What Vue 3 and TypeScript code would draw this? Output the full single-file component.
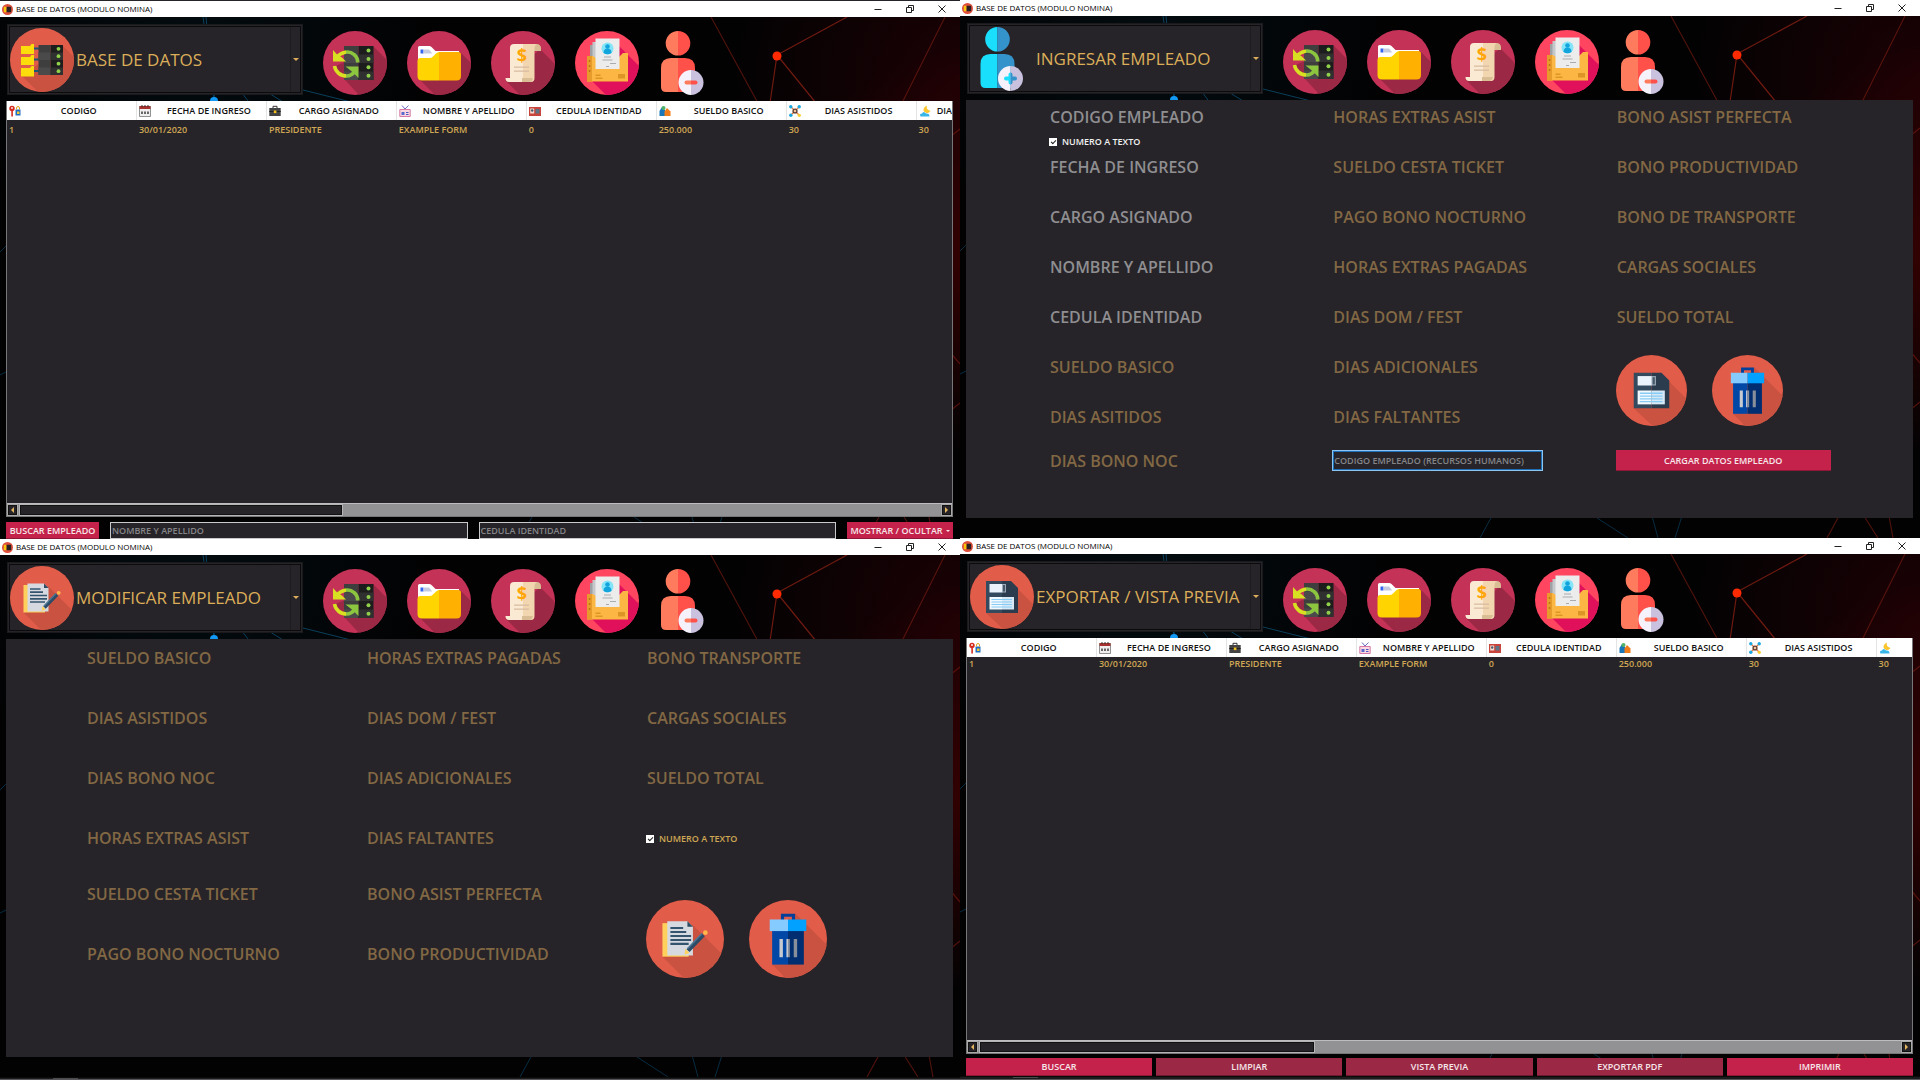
<script setup lang="ts">
import { ref } from 'vue'

interface Column {
  label: string
  icon: string
  value: string
}

interface Field {
  label: string
  required?: boolean
}

const tools = [
  { icon: 'sync', label: 'Actualizar' },
  { icon: 'folder', label: 'Archivos' },
  { icon: 'scroll', label: 'Recibos' },
  { icon: 'docs', label: 'Expedientes' },
]

const baseColumns: Column[] = [
  { label: 'CODIGO', icon: 'h-key', value: '1' },
  { label: 'FECHA DE INGRESO', icon: 'h-calendar', value: '30/01/2020' },
  { label: 'CARGO ASIGNADO', icon: 'h-case', value: 'PRESIDENTE' },
  { label: 'NOMBRE Y APELLIDO', icon: 'h-badge', value: 'EXAMPLE FORM' },
  { label: 'CEDULA IDENTIDAD', icon: 'h-card', value: '0' },
  { label: 'SUELDO BASICO', icon: 'h-money', value: '250.000' },
  { label: 'DIAS ASISTIDOS', icon: 'h-team', value: '30' },
]

const tableColumns: Record<string, Column[]> = {
  table: [...baseColumns, { label: 'DIAS BONO NOCTURNO', icon: 'h-moon', value: '30' }],
  export: [...baseColumns, { label: 'DIAS BONO NOC', icon: 'h-moon', value: '30' }],
}

const insertColumns: Field[][] = [
  [
    { label: 'CODIGO EMPLEADO', required: true },
    { label: 'FECHA DE INGRESO', required: true },
    { label: 'CARGO ASIGNADO', required: true },
    { label: 'NOMBRE Y APELLIDO', required: true },
    { label: 'CEDULA IDENTIDAD', required: true },
    { label: 'SUELDO BASICO' },
    { label: 'DIAS ASITIDOS' },
    { label: 'DIAS BONO NOC' },
  ],
  [
    { label: 'HORAS EXTRAS ASIST' },
    { label: 'SUELDO CESTA TICKET' },
    { label: 'PAGO BONO NOCTURNO' },
    { label: 'HORAS EXTRAS PAGADAS' },
    { label: 'DIAS DOM / FEST' },
    { label: 'DIAS ADICIONALES' },
    { label: 'DIAS FALTANTES' },
  ],
  [
    { label: 'BONO ASIST PERFECTA' },
    { label: 'BONO PRODUCTIVIDAD' },
    { label: 'BONO DE TRANSPORTE' },
    { label: 'CARGAS SOCIALES' },
    { label: 'SUELDO TOTAL' },
  ],
]

const editColumns: Field[][] = [
  [
    { label: 'SUELDO BASICO' },
    { label: 'DIAS ASISTIDOS' },
    { label: 'DIAS BONO NOC' },
    { label: 'HORAS EXTRAS ASIST' },
    { label: 'SUELDO CESTA TICKET' },
    { label: 'PAGO BONO NOCTURNO' },
  ],
  [
    { label: 'HORAS EXTRAS PAGADAS' },
    { label: 'DIAS DOM / FEST' },
    { label: 'DIAS ADICIONALES' },
    { label: 'DIAS FALTANTES' },
    { label: 'BONO ASIST PERFECTA' },
    { label: 'BONO PRODUCTIVIDAD' },
  ],
  [
    { label: 'BONO TRANSPORTE' },
    { label: 'CARGAS SOCIALES' },
    { label: 'SUELDO TOTAL' },
  ],
]

const exportActions = [
  { label: 'BUSCAR', strong: true },
  { label: 'LIMPIAR', strong: false },
  { label: 'VISTA PREVIA', strong: false },
  { label: 'EXPORTAR PDF', strong: false },
  { label: 'IMPRIMIR', strong: true },
]

const sides = [
  [
    { kind: 'table', title: 'BASE DE DATOS', icon: 'database' },
    { kind: 'edit', title: 'MODIFICAR EMPLEADO', icon: 'edit' },
  ],
  [
    { kind: 'insert', title: 'INGRESAR EMPLEADO', icon: 'person-add' },
    { kind: 'export', title: 'EXPORTAR / VISTA PREVIA', icon: 'save' },
  ],
]

const insertAsText = ref(true)
const editAsText = ref(true)
</script>

<template>
  <svg class="sprite" width="0" height="0" aria-hidden="true">
    <defs>
      <clipPath id="disc"><circle cx="32" cy="32" r="32" /></clipPath>
      <linearGradient id="lime" gradientUnits="userSpaceOnUse" x1="0" y1="0" x2="64" y2="0">
        <stop offset="0.36" stop-color="#d8e021" /><stop offset="0.36" stop-color="#8cc63f" />
      </linearGradient>
    </defs>

    <symbol id="sync" viewBox="0 0 64 64">
      <circle cx="32" cy="32" r="32" fill="#c43257" />
      <path d="M50 15l14 14v35H36L10 36l14-6z" fill="#9b2946" clip-path="url(#disc)" />
      <path d="M21 15h14.500v34H21z" fill="#3e3e3f" />
      <path d="M21 23.500h14.500v8.500H21zM21 40.500h14.500v8.500H21z" fill="#4a4a4b" />
      <path d="M35.500 15h15v34h-15z" fill="#1d1d1e" />
      <path d="M35.500 23.500h15v8.500h-15zM35.500 40.500h15v8.500h-15z" fill="#303031" />
      <g fill="#8fd14a"><circle cx="45.500" cy="19.500" r="2" /><circle cx="45.500" cy="28" r="2" /><circle cx="45.500" cy="36.300" r="2" /><circle cx="45.500" cy="44.700" r="2" /></g>
      <g fill="none" stroke="url(#lime)" stroke-width="3.600">
        <path d="M14 26c4-5 12-7 17-2.500 2.500 2 3.700 4.500 3.700 8" />
        <path d="M11.500 35c1 6 6 10 12 10 4 0 6.500-2 8.500-5" />
      </g>
      <path d="M10 19v11.500h13l-4-4-4.500-2.500z" fill="#d8e021" />
      <path d="M35.500 47V35.500h-13l4.500 3.500 3.500 3z" fill="#8cc63f" />
    </symbol>

    <symbol id="folder" viewBox="0 0 64 64">
      <circle cx="32" cy="32" r="32" fill="#c43257" />
      <path d="M53 21l11 11v32H28L11 47z" fill="#9b2946" clip-path="url(#disc)" />
      <path d="M11 16.500q0-1.500 1.500-1.500H22q1.500 0 2.500 1l4 4H52v12H11z" fill="#fff" />
      <path d="M13.500 18.500h3v4h-3z" fill="#3465f0" />
      <path d="M16.500 18.500H22q2 2 3 4h-8.500z" fill="#c7cbe0" />
      <path d="M10.500 30q0-3 3-3h9q2 0 3.500-1.500l3-3q1.500-1.500 3-1.500v28.500H15q-4.500 0-4.500-4.500z" fill="#ffd400" />
      <path d="M32 21h19.500q2.500 0 2.500 2.500V45q0 4.500-4.500 4.500H32z" fill="#ffb000" />
    </symbol>

    <symbol id="scroll" viewBox="0 0 64 64">
      <circle cx="32" cy="32" r="32" fill="#c43257" />
      <path d="M49 18l14 14v32H29L15 50z" fill="#9b2946" clip-path="url(#disc)" />
      <path d="M38 13h7.500q4.500 0 4.500 4.500V20h-7z" fill="#d9bd94" />
      <path d="M23 13h9v38H19V17q0-4 4-4z" fill="#fbead3" />
      <path d="M32 13h14q-2.500 1-2.500 4.500V47q0 4-3.500 4h-8z" fill="#f2d6b0" />
      <path d="M14.500 47H32v4H18q-3.500 0-3.500-4z" fill="#fbead3" />
      <path d="M31 47h11q-1 4-4 4h-7z" fill="#d9bd94" />
      <path d="M23 35.500h15v1.300H23zM23 39.500h15v1.300H23z" fill="#d8bba0" />
      <text x="31" y="31" text-anchor="middle" font-family="Open Sans, sans-serif" font-size="18" font-weight="700" fill="#ffa60a">$</text>
    </symbol>

    <symbol id="docs" viewBox="0 0 64 64">
      <circle cx="32" cy="32" r="32" fill="#ff4560" />
      <path d="M44 15l20 20v29H31L16 49z" fill="#e0105b" clip-path="url(#disc)" />
      <path d="M15 14h6v14h-6z" fill="#9fa2a5" /><path d="M17.500 11h5v16h-5z" fill="#c5c8ca" />
      <path d="M12 25h6l4 3h22v-2l4-4h5v28.500H12z" fill="#fcb643" />
      <path d="M12 25h5v25.500h-5z" fill="#e69b2b" />
      <path d="M13.800 29h1.500v2h-1.500zM13.800 34h1.500v2h-1.500zM13.800 39h1.500v2h-1.500z" fill="#b97716" />
      <path d="M20.500 7.500h24V38h-24z" fill="#ececed" />
      <circle cx="32.500" cy="17.500" r="6" fill="#83e5f7" />
      <circle cx="32.500" cy="15.500" r="2.300" fill="#12a5dd" /><path d="M28.500 22q0-4.500 4-4.500t4 4.500q-4 2.500-8 0z" fill="#12a5dd" />
      <path d="M29 25.500h7v1h-7zM27.500 28.500h10v1h-10zM35 32h6v1h-6zM31 35h3v1h-3z" fill="#a9abae" />
      <path d="M43 43h7v4.500h-7zM20.500 43.500h5V45h-5zM20.500 46.500h7V48h-7z" fill="#dd9526" />
    </symbol>

    <symbol id="person-minus" viewBox="0 0 43 64">
      <path d="M17 0a12.300 12.300 0 0 0 0 24.600zM17 27h-7Q0 27 0 37v19q0 5 5 5h12z" fill="#ff7b5d" />
      <path d="M17 0a12.300 12.300 0 0 1 0 24.600zM17 27h7q10 0 10 10v24H17z" fill="#ff5149" />
      <path d="M30 39a12.400 12.400 0 0 0 0 25z" fill="#f5f2fc" /><path d="M30 39a12.400 12.400 0 0 1 0 25z" fill="#c9c1de" />
      <path d="M30 49.500h-4.500a2 2 0 0 0 0 4H30z" fill="#ff7b5d" /><path d="M30 49.500h4.500a2 2 0 0 1 0 4H30z" fill="#ff5149" />
    </symbol>

    <symbol id="person-add" viewBox="-10.500 0 64 64">
      <path d="M17 0a12.300 12.300 0 0 0 0 24.600zM17 27h-7Q0 27 0 37v19q0 5 5 5h12z" fill="#19dffd" />
      <path d="M17 0a12.300 12.300 0 0 1 0 24.600zM17 27h7q10 0 10 10v24H17z" fill="#3593cb" />
      <path d="M30 39a12.400 12.400 0 0 0 0 25z" fill="#f5f2fc" /><path d="M30 39a12.400 12.400 0 0 1 0 25z" fill="#c9c1de" />
      <path d="M30 45.500q-2 0-2 2v2h-2.500a2 2 0 0 0 0 4H28v2q0 2 2 2z" fill="#19dffd" />
      <path d="M30 45.500q2 0 2 2v2h2.500a2 2 0 0 1 0 4H32v2q0 2-2 2z" fill="#3593cb" />
    </symbol>

    <symbol id="database" viewBox="0 0 64 64">
      <circle cx="32" cy="32" r="32" fill="#e25c4a" />
      <path d="M53 18l11 11v35H28L12 48z" fill="#c95241" clip-path="url(#disc)" />
      <path d="M23 20.500h6M23 31.500h6M23 43h6" stroke="#1c5774" stroke-width="2" />
      <path d="M11 18h9l1.500-2H24v10H11zM11 29h9l1.500-2H24v10H11zM11 40h9l1.500-2H24v10.500H11z" fill="#fddc0b" />
      <path d="M28.500 17h12v30h-12z" fill="#3e3e3f" /><path d="M40.500 17H53v30H40.500z" fill="#1d1d1e" />
      <path d="M28.500 24.500h12V32h-12zM28.500 39.500h12V47h-12z" fill="#4a4a4b" /><path d="M40.500 24.500H53V32H40.500zM40.500 39.500H53V47H40.500z" fill="#303031" />
      <g fill="#8fd14a"><circle cx="48.500" cy="20.800" r="1.900" /><circle cx="48.500" cy="28.200" r="1.900" /><circle cx="48.500" cy="35.700" r="1.900" /><circle cx="48.500" cy="43.200" r="1.900" /></g>
    </symbol>

    <symbol id="edit" viewBox="0 0 64 64">
      <circle cx="32" cy="32" r="32" fill="#e25c4a" />
      <path d="M38 20l25 25v19H31L14 47z" fill="#c95241" clip-path="url(#disc)" />
      <path d="M13.500 19H35v27.500H13.500z" fill="#ffd15c" />
      <path d="M17.500 17.500H34l4.500 4.500v23.500h-21z" fill="#d6d9e0" /><path d="M34 17.500l4.500 4.500H34z" fill="#2f4a63" />
      <path d="M20 23h10.500M20 26.200h13M20 29.500h17M20 32.800h17M20 36h15" stroke="#34546e" stroke-width="1.700" />
      <path d="M47 28.500L34.500 41.500" stroke="#2b4b66" stroke-width="3.400" /><path d="M46 27.500L34 40" stroke="#4f7896" stroke-width="1.200" />
      <path d="M32.300 40l3.400 3.400-4 1.400z" fill="#ffd15c" />
      <circle cx="48.700" cy="26.800" r="1.900" fill="#ffb74a" />
    </symbol>

    <symbol id="save" viewBox="0 0 64 64">
      <circle cx="32" cy="32" r="32" fill="#e25c4a" />
      <path d="M47 23l17 17v24H33L16 48z" fill="#c95241" clip-path="url(#disc)" />
      <path d="M16 16h16v32H16z" fill="#334a5f" /><path d="M32 16h9l7 7v25H32z" fill="#2a3c4e" />
      <path d="M19.500 19h13v8.500h-13z" fill="#eaf3fc" /><path d="M32 19h4v8.500h-4z" fill="#9dabb8" /><path d="M33 20h2v6.500h-2z" fill="#46596b" />
      <path d="M19.500 32h12.500v12.500H19.500z" fill="#f2f9ff" /><path d="M32 32h12v12.500H32z" fill="#d7e8f7" />
      <path d="M21.500 34.500h20.500M21.500 37h20.500M21.500 39.500h20.500M21.500 42h20.500" stroke="#86cbf3" stroke-width="1.200" />
    </symbol>

    <symbol id="trash" viewBox="0 0 64 64">
      <circle cx="32" cy="32" r="32" fill="#e25c4a" />
      <path d="M38 11l26 26v27H30L19 53z" fill="#c95241" clip-path="url(#disc)" />
      <path d="M27.500 17v-4.500h9V17" fill="none" stroke="#04409a" stroke-width="2.600" />
      <path d="M19 25h13v28H19z" fill="#0047a6" /><path d="M32 25h13v28H32z" fill="#002e70" />
      <path d="M17 16h15v9.500H17z" fill="#86cbff" /><path d="M32 16h15v9.500H32z" fill="#00a1ff" />
      <path d="M25 32h2.800v15H25zM30.700 32h1.300v15h-1.300z" fill="#c6c9d0" /><path d="M32 32h1.500v15H32zM36.700 32h2.800v15h-2.800z" fill="#898e9b" />
    </symbol>

    <symbol id="h-key" viewBox="0 0 12 12">
      <circle cx="3" cy="3.500" r="2.700" fill="#d52b1e" /><path d="M2.300 5h1.600v6.500H2.300z" fill="#d52b1e" /><circle cx="3" cy="3" r="0.900" fill="#fff" />
      <path d="M6.500 4.500h5v6h-5z" fill="#1e6ec8" /><path d="M7.500 4.500V3q0-1.500 1.500-1.500T10.500 3v1.500" fill="none" stroke="#e0a51c" /><path d="M8 6.500h2.500v2.500H8z" fill="#f7c92e" />
    </symbol>
    <symbol id="h-calendar" viewBox="0 0 12 12">
      <path d="M.5 1.500h11v10H.5z" fill="#f0eeee" stroke="#777" stroke-width="0.800" /><path d="M.5 1h11v3H.5z" fill="#a5322e" />
      <path d="M3 0v2M6 0v2M9 0v2" stroke="#333" /><path d="M3 6.500v2.500M6 6.500v2.500M9 6.500v2.500" stroke="#222" stroke-width="1.300" />
    </symbol>
    <symbol id="h-case" viewBox="0 0 12 12">
      <path d="M4 3V1.300h4V3" fill="none" stroke="#333" /><path d="M.3 3h11.400v8H.3z" fill="#444" /><path d="M.3 6h11.400v1H.3z" fill="#222" /><path d="M4.800 5.500h2.600v2.600H4.800z" fill="#f3c11c" />
    </symbol>
    <symbol id="h-badge" viewBox="0 0 12 12">
      <path d="M3 .5L6 4 9.500.5" fill="none" stroke="#6a6fbf" /><path d="M.8 4.500h10.400v7H.8z" fill="#fbd7e2" stroke="#d77aa6" />
      <path d="M2.500 7h3v3h-3z" fill="#5a6bd0" /><path d="M7 7.500h2.500M7 9.500h2.500" stroke="#4b58c2" />
    </symbol>
    <symbol id="h-card" viewBox="0 0 12 12">
      <path d="M0 2h12v9H0z" fill="#c8443c" /><path d="M1.200 3.500h4v5h-4z" fill="#f4d9cf" /><circle cx="3.200" cy="5.500" r="1.200" fill="#46596b" /><path d="M6.500 4h4v4.500h-4z" fill="#5d7486" />
    </symbol>
    <symbol id="h-money" viewBox="0 0 12 12">
      <path d="M.5 11V6L3 2l3 3v6z" fill="#1976b8" /><circle cx="4.500" cy="3" r="2" fill="#52b36b" /><path d="M5.500 11V6.500L8 3l3.500 3.500V11z" fill="#f07d1a" />
    </symbol>
    <symbol id="h-team" viewBox="0 0 12 12">
      <path d="M2 2l8 8M10 2l-8 8" stroke="#e47b3c" stroke-width="1.200" /><circle cx="1.800" cy="1.800" r="1.700" fill="#19a7e0" /><circle cx="10.200" cy="1.800" r="1.700" fill="#19a7e0" />
      <circle cx="6" cy="6" r="2.600" fill="#5a3a33" /><circle cx="6" cy="6" r="1.300" fill="#f2c49b" /><circle cx="1.800" cy="10.200" r="1.700" fill="#19a7e0" /><circle cx="10.300" cy="10.300" r="1.600" fill="#fcd02d" />
    </symbol>
    <symbol id="h-moon" viewBox="0 0 12 12">
      <path d="M8 .5q-1.500 4 3.500 5.500-2 3-5 1.500T5 3Q6 1 8 .5z" fill="#fbc52c" /><path d="M1.500 11.500q-1.500-3 1.500-3 1.500-3 4 0 3.500-.5 3.500 3z" fill="#38b6e8" />
    </symbol>
  </svg>

  <main class="page">
    <div v-for="(side, s) in sides" :key="s" class="side" :class="{ first: s === 0 }">
      <section v-for="win in side" :key="win.kind" class="window">
        <header class="titlebar">
          <svg class="app-icon" viewBox="0 0 12 12" aria-hidden="true">
            <circle cx="6" cy="6" r="6" fill="#de4f3c" /><path d="M2 3h3v6H2z" fill="#fbc50d" /><path d="M5 3h5v6H5z" fill="#2a2022" />
          </svg>
          <h1>BASE DE DATOS (MODULO NOMINA)</h1>
          <div class="controls">
            <button type="button" aria-label="Minimizar"><svg viewBox="0 0 10 10"><path d="M1.500 5.500h7" /></svg></button>
            <button type="button" aria-label="Restaurar"><svg viewBox="0 0 10 10"><path d="M1.500 3.500h5v5h-5zM3.500 3V1.500h5v5H7" /></svg></button>
            <button type="button" aria-label="Cerrar"><svg viewBox="0 0 10 10"><path d="M1.500 1.500l7 7M8.500 1.500l-7 7" /></svg></button>
          </div>
        </header>

        <div class="body">
          <svg class="network" viewBox="0 0 960 522" preserveAspectRatio="none" aria-hidden="true">
            <g stroke="#0a3f5c" stroke-width="1">
              <path d="M203 0l12 84M206 0l8 84M236 68l12 16M262 72l26 16M303 73l56 14" />
              <path opacity="0.700" d="M0 235l8-8M0 358l8-4M532 500l-12 22M634 500l34 22M692 500l6 22M722 500l-7 22" />
            </g>
            <g stroke="#6e1a10" stroke-width="1.200">
              <path d="M777 38l70-38M777 38l-7 48M777 38l39 48" />
              <path opacity="0.700" d="M711 0l48 88M945 0l-44 88M950 120l10-8M950 335l10 12M950 394l10-8M879 500l-12 22M904 500l14 22M929 500l4 22" />
            </g>
            <circle cx="214" cy="84" r="4" fill="#1199f5" /><circle cx="777" cy="39" r="4.500" fill="#ff2a00" />
          </svg>

          <div class="toolbar">
            <button type="button" class="selector" aria-haspopup="menu">
              <svg class="disc"><use :href="`#${win.icon}`" /></svg>
              <span class="selector-text">{{ win.title }}</span>
              <span class="selector-arrow"><i class="caret"></i></span>
            </button>
            <button v-for="tool in tools" :key="tool.icon" type="button" class="tool" :aria-label="tool.label">
              <svg class="disc"><use :href="`#${tool.icon}`" /></svg>
            </button>
            <button type="button" class="tool remove" aria-label="Eliminar empleado">
              <svg class="person"><use href="#person-minus" /></svg>
            </button>
          </div>

          <div v-if="win.kind === 'table' || win.kind === 'export'" class="grid-box" :class="win.kind">
            <div class="viewport">
              <table>
                <thead>
                  <tr>
                    <th v-for="col in tableColumns[win.kind]" :key="col.label" scope="col">
                      <div class="th"><svg><use :href="`#${col.icon}`" /></svg><span>{{ col.label }}</span></div>
                    </th>
                  </tr>
                </thead>
                <tbody>
                  <tr><td v-for="col in tableColumns[win.kind]" :key="col.label">{{ col.value }}</td></tr>
                </tbody>
              </table>
            </div>
            <div class="scrollbar">
              <button type="button" class="arrow" aria-label="Desplazar a la izquierda"><i class="left"></i></button>
              <div class="track"><div class="thumb"></div></div>
              <button type="button" class="arrow" aria-label="Desplazar a la derecha"><i class="right"></i></button>
            </div>
          </div>

          <form v-if="win.kind === 'table'" class="searchbar" @submit.prevent>
            <button type="submit" class="action strong">BUSCAR EMPLEADO</button>
            <input class="boxed" type="text" placeholder="NOMBRE Y APELLIDO" aria-label="NOMBRE Y APELLIDO">
            <input class="boxed" type="text" placeholder="CEDULA IDENTIDAD" aria-label="CEDULA IDENTIDAD">
            <button type="button" class="action strong menu">MOSTRAR / OCULTAR<i class="caret"></i></button>
          </form>

          <div v-if="win.kind === 'export'" class="actions">
            <button v-for="a in exportActions" :key="a.label" type="button" class="action" :class="{ strong: a.strong }">{{ a.label }}</button>
          </div>

          <form v-if="win.kind === 'insert'" class="panel insert" @submit.prevent>
            <div v-for="(col, c) in insertColumns" :key="c" class="column">
              <div v-for="(field, i) in col" :key="field.label" class="cell">
                <input class="field" :class="{ required: field.required }" type="text" :placeholder="field.label" :aria-label="field.label">
                <label v-if="c === 0 && i === 0" class="check light">
                  <input v-model="insertAsText" type="checkbox"><span>NUMERO A TEXTO</span>
                </label>
              </div>
              <input v-if="c === 1" class="boxed focus" type="text" placeholder="CODIGO EMPLEADO (RECURSOS HUMANOS)" aria-label="CODIGO EMPLEADO (RECURSOS HUMANOS)">
              <template v-if="c === 2">
                <div class="rounds">
                  <button type="button" class="round" aria-label="Guardar"><svg><use href="#save" /></svg></button>
                  <button type="button" class="round" aria-label="Borrar"><svg><use href="#trash" /></svg></button>
                </div>
                <button type="submit" class="action strong load">CARGAR DATOS EMPLEADO</button>
              </template>
            </div>
          </form>

          <form v-if="win.kind === 'edit'" class="panel edit" @submit.prevent>
            <div v-for="(col, c) in editColumns" :key="c" class="column">
              <div v-for="field in col" :key="field.label" class="cell">
                <input class="field" type="text" :placeholder="field.label" :aria-label="field.label">
              </div>
              <template v-if="c === 2">
                <div class="cell">
                  <label class="check">
                    <input v-model="editAsText" type="checkbox"><span>NUMERO A TEXTO</span>
                  </label>
                </div>
                <div class="rounds">
                  <button type="button" class="round" aria-label="Modificar"><svg><use href="#edit" /></svg></button>
                  <button type="button" class="round" aria-label="Borrar"><svg><use href="#trash" /></svg></button>
                </div>
              </template>
            </div>
          </form>
        </div>
      </section>
      <footer class="taskbar"><span></span></footer>
    </div>
  </main>
</template>

<style>
body {
  background: #000;
}
</style>

<style scoped>
.sprite {
  position: absolute;
}

.page {
  display: grid;
  grid-template-columns: 1fr 1fr;
  min-height: 100vh;
  font-family: "Open Sans", "Noto Sans", sans-serif;
  font-size: 9px;
  font-weight: 600;
  line-height: 12px;
  color: #d0a755;
}

.page *,
.page *::before {
  box-sizing: border-box;
}

button,
input {
  font: inherit;
  margin: 0;
  padding: 0;
  border: 0;
  border-radius: 0;
}

button {
  background: none;
  color: inherit;
}

svg {
  display: block;
}

.side {
  display: flex;
  flex-direction: column;
  min-width: 0;
}

.side.first {
  border-top: 1px solid #262428;
}

.window {
  display: flex;
  flex: 1;
  flex-direction: column;
}

.titlebar {
  display: flex;
  align-items: center;
  height: 16px;
  padding-left: 2px;
  background: #fff;
}

.app-icon {
  width: 11px;
  height: 11px;
}

h1 {
  flex: 1;
  margin: 0 0 0 3px;
  font-size: 8px;
  font-weight: 400;
  color: #000;
}

.controls {
  display: flex;
  padding-right: 2px;
}

.controls button {
  width: 32px;
  height: 14px;
}

.controls svg {
  width: 10px;
  height: 10px;
  margin: 0 auto;
  fill: none;
  stroke: #222;
}

.body {
  position: relative;
  display: flex;
  flex: 1;
  flex-direction: column;
  padding: 7px 7px 0 6px;
  background:
    radial-gradient(circle at 100% 12%, rgba(60, 0, 6, 0.45), transparent 22%),
    radial-gradient(circle at 102% 45%, rgba(80, 0, 0, 0.65), transparent 20%),
    radial-gradient(circle at 20% 5%, rgba(4, 22, 30, 0.5), transparent 26%),
    #020203;
}

.network {
  position: absolute;
  inset: 0;
  width: 100%;
  height: 100%;
  fill: none;
}

.toolbar,
.grid-box,
.searchbar,
.actions,
.panel {
  position: relative;
}

.toolbar {
  display: flex;
  align-items: flex-end;
  gap: 20px;
  height: 71px;
  padding-left: 1px;
}

.selector {
  display: flex;
  align-items: center;
  width: 296px;
  height: 71px;
  padding: 2px;
  border: 1px solid #1a191b;
  outline: 1px solid #0b0b0c;
  outline-offset: -3px;
  background: #262428;
  color: #dcae5a;
  font-size: 17px;
  font-weight: 500;
  line-height: 22px;
  text-align: left;
}

.selector-text {
  flex: 1;
  margin-left: 2px;
  white-space: nowrap;
}

.selector-arrow {
  display: flex;
  align-items: center;
  justify-content: center;
  width: 10px;
  height: 100%;
  border-left: 1px solid #1d1c1f;
}

.caret {
  border: 3px solid transparent;
  border-top-color: currentColor;
  border-bottom: 0;
}

.disc {
  width: 64px;
  height: 64px;
}

.remove {
  margin-left: 2px;
}

.person {
  width: 43px;
  height: 64px;
}

.grid-box {
  display: flex;
  flex: 1;
  flex-direction: column;
  margin-top: 6px;
  border: 1px solid #77777a;
  border-top: 0;
  background: #262428;
}

.viewport {
  flex: 1;
  overflow: hidden;
}

table {
  width: 1040px;
  table-layout: fixed;
  border-collapse: collapse;
}

th {
  height: 19px;
  padding: 0 0 0 2px;
  border-right: 1px solid #e4e4e4;
  background: #fff;
  color: #111;
  font-weight: 600;
}

.th {
  display: flex;
  align-items: center;
}

.th svg {
  width: 12px;
  height: 12px;
}

.th span {
  flex: 1;
  text-align: center;
  white-space: nowrap;
}

td {
  height: 19px;
  padding: 0 0 0 2px;
}

.export td {
  height: 13px;
}

.scrollbar {
  display: flex;
  align-items: center;
  gap: 3px;
  height: 13px;
  padding: 0 1px;
  border-top: 1px solid #bdbdbf;
  background: #929193;
}

.arrow {
  display: flex;
  align-items: center;
  justify-content: center;
  width: 9px;
  height: 10px;
  border: 1px solid #111;
  outline: 1px solid #aaa;
  background: #262428;
  color: #e3b55e;
}

.arrow i {
  border: 3px solid transparent;
}

.arrow .left {
  border-right-color: currentColor;
  border-left: 0;
}

.arrow .right {
  border-left-color: currentColor;
  border-right: 0;
}

.track {
  flex: 1;
}

.thumb {
  width: 35%;
  height: 10px;
  border: 1px solid #111;
  outline: 1px solid #b5b5b7;
  background: #262428;
}

.export .thumb {
  width: calc(100% * 4 / 11);
}

.searchbar {
  display: flex;
  gap: 11px;
  height: 17px;
  margin-top: 5px;
}

.action {
  background: #9b2946;
  color: #f6e7ea;
  text-align: center;
  white-space: nowrap;
  box-shadow: inset 0 -1px #6d1830;
}

.strong {
  background: #c4224a;
  box-shadow: inset 0 -1px #8d1735;
}

.searchbar .action {
  width: 93px;
}

.searchbar .menu {
  display: flex;
  align-items: center;
  justify-content: center;
  gap: 3px;
  width: 106px;
}

.menu .caret {
  border-width: 2px;
  border-bottom: 0;
}

.boxed {
  flex: 1;
  min-width: 0;
  padding: 0 1px;
  border: 1px solid #c9c9cb;
  background: #262428;
  color: #eee;
}

.boxed::placeholder {
  color: #858588;
  opacity: 1;
}

.actions {
  display: grid;
  grid-template-columns: repeat(5, 1fr);
  gap: 4px;
  height: 18px;
  margin-top: 4px;
}

.panel {
  display: grid;
  grid-template-columns: repeat(3, 1fr);
  flex: 1;
  margin: 6px 0 20px;
  background: #262428;
}

.insert {
  padding: 0 14px 0 83px;
}

.edit {
  padding: 2px 27px 0 80px;
}

.column {
  min-width: 0;
}

.cell {
  height: 50px;
}

.edit .cell {
  height: 60px;
}

.edit .cell:nth-child(4) {
  height: 56px;
}

.insert .cell:nth-child(8) {
  height: 21px;
  margin-top: -6px;
}

.field {
  display: block;
  width: 100%;
  height: 34px;
  padding-left: 1px;
  background: transparent;
  color: #dcae5a;
  font-size: 16px;
}

.field::placeholder {
  color: #826844;
  opacity: 1;
}

.field.required::placeholder {
  color: #8f8e91;
}

.check {
  display: flex;
  align-items: center;
  gap: 5px;
  height: 16px;
}

.edit .check {
  height: 36px;
}

.check.light {
  color: #f2f2f2;
}

.check input {
  display: grid;
  place-items: center;
  width: 8px;
  height: 8px;
  appearance: none;
  background: #fff;
}

.check input:checked::before {
  width: 5px;
  height: 3px;
  border: solid #222;
  border-width: 0 0 1px 1px;
  content: "";
  transform: translateY(-1px) rotate(-45deg);
}

.rounds {
  display: flex;
  gap: 25px;
  height: 100px;
  padding-top: 5px;
}

.round,
.round svg {
  width: 71px;
  height: 71px;
}

.edit .rounds {
  padding-top: 23px;
}

.edit .round,
.edit .round svg {
  width: 78px;
  height: 78px;
}

.insert .boxed {
  display: block;
  width: 211px;
  height: 21px;
}

.boxed.focus {
  border: 1px solid #8cc4f0;
  outline: 1px solid #1d6fb8;
  outline-offset: -2px;
}

.load {
  display: block;
  width: 215px;
  height: 21px;
}

.taskbar {
  height: 4px;
  border-top: 1px solid #0a0a0a;
  border-bottom: 1px solid #55555a;
  background: #1b1b1c;
}

.first .taskbar {
  height: 3px;
}

.taskbar span {
  display: block;
  width: 25px;
  height: 1px;
  margin-left: 53px;
  background: #4a4a4c;
}
</style>
